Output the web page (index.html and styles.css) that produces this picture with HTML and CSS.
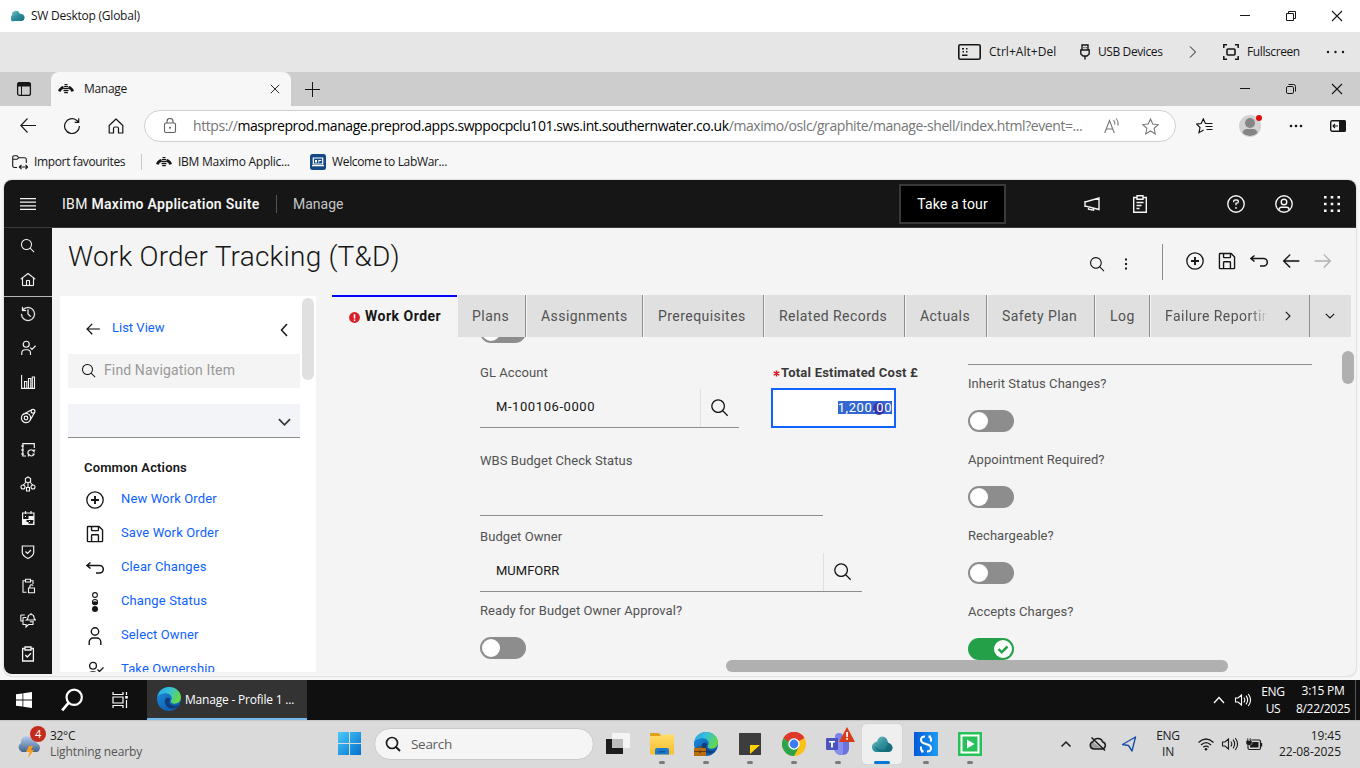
FILE: index.html
```html
<!DOCTYPE html>
<html lang="en">
<head>
<meta charset="utf-8">
<title>SW Desktop (Global)</title>
<link rel="stylesheet" href="styles.css">
</head>
<body>
<svg class="defs" aria-hidden="true">
  <defs>
    <linearGradient id="gTeal" x1="0" y1="0" x2="1" y2="1"><stop offset="0" stop-color="#7fc8cc"/><stop offset=".5" stop-color="#2e8f9b"/><stop offset="1" stop-color="#17707f"/></linearGradient>
    <linearGradient id="gEdgeA" x1="0" y1="0" x2="1" y2=".4"><stop offset="0" stop-color="#2aa5e0"/><stop offset=".5" stop-color="#35c1d8"/><stop offset="1" stop-color="#62d84e"/></linearGradient>
    <linearGradient id="gEdgeB" x1="0" y1="0" x2="1" y2="1"><stop offset="0" stop-color="#1b8fe0"/><stop offset="1" stop-color="#0c4fa0"/></linearGradient>
    <linearGradient id="gWin" x1="0" y1="0" x2="1" y2="1"><stop offset="0" stop-color="#4cc9f8"/><stop offset="1" stop-color="#0070d0"/></linearGradient>
    <linearGradient id="gFold" x1="0" y1="0" x2="0" y2="1"><stop offset="0" stop-color="#ffdc6a"/><stop offset="1" stop-color="#f8be2c"/></linearGradient>
    <linearGradient id="gCloud" x1="0" y1="0" x2="0" y2="1"><stop offset="0" stop-color="#b5cbee"/><stop offset="1" stop-color="#41648c"/></linearGradient>
    <linearGradient id="gBlue" x1="0" y1="0" x2="1" y2="0"><stop offset="0" stop-color="#0059d8"/><stop offset="1" stop-color="#1f9cf2"/></linearGradient>
  </defs>
  <symbol id="search" viewBox="0 0 32 32"><path d="M29 27.59l-7.55-7.56a11.02 11.02 0 1 0-1.42 1.42L27.59 29zM4 13a9 9 0 1 1 9 9 9 9 0 0 1-9-9z"/></symbol>
  <symbol id="save" viewBox="0 0 32 32"><path d="M27.71 9.29l-5-5A1 1 0 0 0 22 4H6a2 2 0 0 0-2 2v20a2 2 0 0 0 2 2h20a2 2 0 0 0 2-2V10a1 1 0 0 0-.29-.71zM12 6h8v4h-8zm8 20h-8v-8h8zm2 0v-8a2 2 0 0 0-2-2h-8a2 2 0 0 0-2 2v8H6V6h4v4a2 2 0 0 0 2 2h8a2 2 0 0 0 2-2V6.41l4 4V26z"/></symbol>
  <symbol id="homec" viewBox="0 0 32 32"><path d="M16.61 2.21a1 1 0 0 0-1.24 0L1 13.42 2.24 15 4 13.62V26a2 2 0 0 0 2 2h20a2 2 0 0 0 2-2V13.63L29.76 15 31 13.43zM18 26h-4v-8h4zm2 0v-8a2 2 0 0 0-2-2h-4a2 2 0 0 0-2 2v8H6V12.06l10-7.79 10 7.8V26z" stroke="currentColor" stroke-width=".3"/></symbol>
  <symbol id="left" viewBox="0 0 32 32"><path d="M14 26l1.41-1.41L7.83 17H28v-2H7.83l7.58-7.59L14 6 4 16z" stroke="currentColor" stroke-width=".2"/></symbol>
  <symbol id="history" viewBox="0 0 32 32"><path d="M20.59 22L15 16.41V7h2v8.58l5 5zM16 2A13.94 13.94 0 0 0 6 6.23V2H4v8h8V8H7.08A12 12 0 1 1 4 16H2A14 14 0 1 0 16 2z" stroke="currentColor" stroke-width=".5"/></symbol>
  <symbol id="undo" viewBox="0 0 18 18"><path class="ln" d="M4.500 3.500L1 6.500l3.500 3M1.200 6.500H13.500a3.800 3.800 0 0 1 0 7.600H10" stroke-width="1.500"/></symbol>
  <symbol id="add" viewBox="0 0 18 18"><circle class="ln" cx="9" cy="9" r="8.200" stroke-width="1.300"/><path class="ln" d="M9 5v8M5 9h8" stroke-width="1.900"/></symbol>
  <symbol id="user" viewBox="0 0 18 18"><circle class="ln" cx="9" cy="4.500" r="3.700" stroke-width="1.400"/><path class="ln" d="M3.200 18v-3a4 4 0 0 1 4-4h3.600a4 4 0 0 1 4 4v3" stroke-width="1.400"/></symbol>
  <symbol id="usercheck" viewBox="0 0 18 18"><circle class="ln" cx="7" cy="4.800" r="3.400" stroke-width="1.300"/><path class="ln" d="M2 17v-2.200a3.800 3.800 0 0 1 3.800-3.800H8a3.800 3.800 0 0 1 3.800 3.800V17M11.500 8.500l2 2L17.500 6.500" stroke-width="1.300"/></symbol>
  <symbol id="status" viewBox="0 0 18 20"><circle class="ln" cx="9" cy="3" r="2.400" stroke-width="1.100"/><circle class="ln" cx="9" cy="10" r="2.500" stroke-width="1.100"/><path d="M6 9.800h2.200L9 8.800l.8 1H12v.4a3 3 0 0 1-6 0z"/><circle cx="9" cy="17" r="3"/></symbol>
  <symbol id="chR" viewBox="0 0 12 12"><path class="ln" d="M3.800 1.800L8 6l-4.200 4.200" stroke-width="1.100"/></symbol>
  <symbol id="chD" viewBox="0 0 12 12"><path class="ln" d="M1.800 3.800L6 8l4.200-4.200" stroke-width="1.100"/></symbol>
  <symbol id="bee" viewBox="0 0 16 10"><path d="M0 6.500Q2 2.500 5 2l1 2.500L3.500 6 3 7.500Q1 8 0 6.500zM16 6.500Q14 2.500 11 2l-1 2.500L12.500 6l.5 1.500Q15 8 16 6.500z"/><path d="M6.500 0h3v1.200h-3zM5.800 2h4.400v1.200H5.800zM5.500 4h5v1.200h-5zM5.500 6h5v1.200h-5zM6.200 8h3.600v1.200H6.200z"/></symbol>
  <symbol id="min" viewBox="0 0 12 12"><path class="ln" d="M1 5.500h10" stroke-width="1"/></symbol>
  <symbol id="restore" viewBox="0 0 12 12"><path class="ln" d="M1.500 3.500h7v7h-7zM3.500 3V1.500h7v7H9" stroke-width="1"/></symbol>
  <symbol id="restoreR" viewBox="0 0 12 12"><rect class="ln" x="1.500" y="3.500" width="7" height="7" rx="1.300" stroke-width="1"/><path class="ln" d="M3.500 1.500h5a2 2 0 0 1 2 2v5" stroke-width="1"/></symbol>
  <symbol id="x" viewBox="0 0 12 12"><path class="ln" d="M1 1l10 10M11 1L1 11" stroke-width="1.100"/></symbol>
  <symbol id="spk" viewBox="0 0 18 16"><path class="ln" d="M1.500 6h2.500L7.500 3v10L4 10H1.500zM9.800 5.500q2 2.500 0 5M12 3.700q3.300 4.300 0 8.600M14.300 2q4.500 6 0 12" stroke-width="1.100"/></symbol>
  <symbol id="edge" viewBox="0 0 24 24"><circle cx="12" cy="12" r="12" fill="url(#gEdgeB)"/><path d="M.4 9.500C2 3.500 6.500 0 12 0c7 0 12 5 12 10.500 0 3.800-3 6.200-6.300 6.200-2.900 0-4-1.200-4-2.200s1-1.400 1-3.300c0-2.700-2.700-5-6-5C5 6.200 1.800 7.500.4 9.500z" fill="url(#gEdgeA)"/><path d="M8.500 11.500c-2 5 1 9.500 6 10 3 .3 6-1 7.500-3.500-3 1.600-7.500 1.200-9-1.500-1-1.800-.3-3 .3-4.200-.9-1.700-3.800-2.300-4.800-.8z" fill="#123d7c"/></symbol>
  <symbol id="clip" viewBox="0 0 16 16"><path class="ln" d="M5 2.500H2.600v12.500h10.800V2.500H11M5 1h6v3H5z" stroke-width="1.300"/></symbol>
</svg>

<header class="titlebar">
  <svg class="cloud" viewBox="0 0 14 12"><path d="M3.500 11A3 3 0 0 1 1 5.500 4 4 0 0 1 8.800 3.800 3.800 3.800 0 0 1 13.500 8 3 3 0 0 1 11 11z" fill="url(#gTeal)"/></svg>
  <span class="sg vm-name">SW Desktop (Global)</span>
  <div class="wincontrols">
    <i><svg class="s12"><use href="#min"/></svg></i><i><svg class="s12"><use href="#restore"/></svg></i><i><svg class="s12"><use href="#x"/></svg></i>
  </div>
</header>

<div class="vmbar">
  <svg class="kbd" viewBox="0 0 23 16"><rect class="ln" x=".8" y=".8" width="21.400" height="14.400" rx="1.500" stroke-width="1.600"/><path d="M4 4h2v1.500H4zM8 4h1.500v1.500H8zM4.500 7H6v1.500H4.500zM8 7h1.500v1.500H8zM4 10.500h5.500V12H4z"/></svg>
  <span class="sg t-cad">Ctrl+Alt+Del</span>
  <svg class="usb" viewBox="0 0 10 16"><path class="ln" d="M2 6V1h6v5M.8 6h8.400v4L7 12H3L.8 10zM5 12v3.500" stroke-width="1.400"/><path d="M3.500 3h1v1.200h-1zM5.700 3h1v1.200h-1z"/></svg>
  <span class="sg t-usb">USB Devices</span>
  <svg class="vchev" viewBox="0 0 8 12"><path class="ln" d="M1 .5L6.500 6 1 11.500" stroke-width="1"/></svg>
  <svg class="full" viewBox="0 0 16 16"><path class="ln" d="M.8 4V.8H4M12 .8h3.200V4M15.200 12v3.200H12M4 15.200H.8V12" stroke-width="1.500"/><rect class="ln" x="4" y="5" width="8" height="6" rx="1" stroke-width="1.600"/></svg>
  <span class="sg t-full">Fullscreen</span>
  <svg class="dots" viewBox="0 0 20 4"><circle cx="2" cy="2" r="1.200"/><circle cx="9.500" cy="2" r="1.200"/><circle cx="17" cy="2" r="1.200"/></svg>
</div>

<div class="tabstrip">
  <svg class="tabact" viewBox="0 0 16 16"><rect class="ln" x="1.600" y="1.600" width="12.800" height="12.800" rx="2" stroke-width="1.300"/><path d="M1.500 3a2 2 0 0 1 2-2h9a2 2 0 0 1 2 2v2.500h-13z"/><path class="ln" d="M5.500 5v9" stroke-width="1"/></svg>
  <div class="btab">
    <svg class="bee"><use href="#bee"/></svg><span class="sg t-manage">Manage</span><svg class="tx"><use href="#x"/></svg>
  </div>
  <svg class="plus" viewBox="0 0 15 15"><path class="ln" d="M7.500 0v15M0 7.500h15" stroke-width="1"/></svg>
  <div class="wincontrols">
    <i><svg class="s12"><use href="#min"/></svg></i><i><svg class="s12"><use href="#restoreR"/></svg></i><i><svg class="s12"><use href="#x"/></svg></i>
  </div>
</div>

<div class="addr">
  <svg class="n1" viewBox="0 0 16 16"><path class="ln" d="M16 7.500H.8M7.500 .5L.8 7.500l6.700 7" stroke-width="1.100"/></svg>
  <svg class="n2" viewBox="0 0 16 16"><path class="ln" d="M15.400 8A7.400 7.400 0 1 1 12.500 2.200L14.500 4M14.700.3v4h-4" stroke-width="1.200"/></svg>
  <svg class="n3" viewBox="0 0 16 16"><path class="ln" d="M1.200 7.500L8 1l6.800 6.500V15H10.500V10.500q0-1.500-1.500-1.500H7q-1.500 0-1.500 1.500V15H1.200z" stroke-width="1.200" stroke-linejoin="round"/></svg>
  <div class="urlbox">
    <svg class="lock" viewBox="0 0 14 16"><rect class="ln" x="1.500" y="5" width="11" height="9.500" rx="1.500" stroke-width="1.100"/><path class="ln" d="M4 5V3.500a3 3 0 0 1 6 0V5" stroke-width="1.100"/><circle cx="7" cy="9.700" r="1"/></svg>
    <span class="sg url">https://<b>maspreprod.manage.preprod.apps.swppocpclu101.sws.int.southernwater.co.uk</b>/maximo/oslc/graphite/manage-shell/index.html?event=...</span>
    <svg class="read" viewBox="0 0 16 16"><path class="ln" d="M.7 15L5.500 2.500 10.300 15M2.300 11h6.400M9.500 2.200q2 2 1.200 4.500M12 .5q3 3.500 1.700 7" stroke-width="1.100"/></svg>
    <svg class="star" viewBox="0 0 16 16"><path class="ln" d="M8 .9l2.100 4.800 5.200.5-3.900 3.500 1.100 5.200L8 12.200l-4.500 2.700 1.100-5.200L.7 6.200l5.200-.5z" stroke-width="1"/></svg>
  </div>
  <svg class="fav" viewBox="0 0 17 16"><path class="ln" d="M10.500 5.500H9.400L7.300.9 5.200 5.500l-4.600.6 3.400 3.400-1 5.200 4.600-2.600M10 5.500h6.500M9.500 8.500h7M10.500 11.500h6" stroke-width="1.200"/></svg>
  <div class="avatar"><svg viewBox="0 0 22 22"><circle cx="11" cy="11" r="11" fill="#d2d2d2"/><circle cx="11" cy="8" r="5" fill="#858585"/><path d="M3.500 18q1-4 4-4h7q3 0 4 4a11 11 0 0 1-15 0z" fill="#858585"/></svg><em></em></div>
  <svg class="more" viewBox="0 0 14 4"><circle cx="2" cy="2" r="1.300"/><circle cx="7" cy="2" r="1.300"/><circle cx="12" cy="2" r="1.300"/></svg>
  <svg class="side" viewBox="0 0 16 12"><rect class="ln" x=".7" y=".7" width="14.600" height="10.600" rx="1.500" stroke-width="1.400"/><path d="M9 0h5a2 2 0 0 1 2 2v8a2 2 0 0 1-2 2H9z"/><path class="ln" d="M8 6H3.200M5 4L3 6l2 2" stroke-width="1.100"/></svg>
</div>

<div class="books">
  <svg class="imp" viewBox="0 0 16 15"><path class="ln" d="M5 12.500H2.500q-1.800 0-1.800-1.800V2.500Q.7.800 2.500.8H5l1.800 2h5.700q1.800 0 1.800 1.800v3.500M.7 4.300H5l1.800-1.500M7.500 12h8M9.500 9.800L7.300 12l2.200 2.200M13.500 9.800l2.200 2.200-2.200 2.200" stroke-width="1.100"/></svg>
  <span class="sg t-imp">Import favourites</span><span class="bsep"></span>
  <svg class="bee"><use href="#bee"/></svg><span class="sg t-ibm">IBM Maximo Applic...</span>
  <svg class="lab" viewBox="0 0 16 16"><rect width="16" height="16" rx="2.500" fill="#134a86"/><path d="M3.300 4h9.400v6H3.300z" fill="none" stroke="#fff" stroke-width="1.200"/><path d="M2 11h12v1.300H2zM5 6h2v2.500H5zM8.300 6h3v1h-2v1.500h-1z" fill="#fff"/></svg>
  <span class="sg t-lab">Welcome to LabWar...</span>
</div>

<div class="stage">
<div class="app">
  <div class="apphead">
    <svg class="burger" viewBox="0 0 16 12"><path d="M0 0h16v1.200H0zM0 3.600h16v1.200H0zM0 7.200h16v1.200H0zM0 10.800h16V12H0z"/></svg>
    <span class="suite">IBM <b>Maximo Application Suite</b></span><span class="hsep"></span><span class="mng">Manage</span>
    <button class="tour">Take a tour</button>
    <svg class="horn" viewBox="0 0 18 16"><path class="ln" d="M16 2v11.500L2 10V6zM2 5v6M5.500 10.800v2.400l5 1v-2" stroke-width="1.400"/></svg>
    <svg class="task" viewBox="0 0 16 18"><path class="ln" d="M5 2.500H1.700v14.800h12.600V2.500H11M5 .8h6v3.400H5zM4.500 7.500h7M4.500 10.500h5M4.500 13.500h3" stroke-width="1.400"/></svg>
    <svg class="help" viewBox="0 0 18 18"><circle class="ln" cx="9" cy="9" r="8.200" stroke-width="1.400"/><path class="ln" d="M6.600 7.200V6.500q0-1.500 1.500-1.500h1.700q1.600 0 1.600 1.600T9.800 8.200H9v2" stroke-width="1.300"/><circle cx="9" cy="12.900" r=".9"/></svg>
    <svg class="acct" viewBox="0 0 18 18"><circle class="ln" cx="9" cy="9" r="8.200" stroke-width="1.400"/><circle class="ln" cx="9" cy="7" r="2.800" stroke-width="1.400"/><path class="ln" d="M4 15v-.5a2.300 2.300 0 0 1 2.300-2.300h5.400a2.300 2.300 0 0 1 2.300 2.300v.5" stroke-width="1.400"/></svg>
    <svg class="grid9" viewBox="0 0 16 16"><path d="M0 0h2.600v2.600H0zM6.700 0h2.600v2.600H6.700zM13.400 0H16v2.600h-2.600zM0 6.700h2.600v2.600H0zM6.700 6.700h2.600v2.600H6.700zM13.400 6.700H16v2.600h-2.600zM0 13.400h2.600V16H0zM6.700 13.400h2.600V16H6.700zM13.400 13.400H16V16h-2.600z"/></svg>
  </div>
  <div class="body">
    <nav class="rail">
      <i><svg><use href="#search"/></svg></i>
      <i><svg><use href="#homec"/></svg></i>
      <hr>
      <i><svg><use href="#history"/></svg></i>
      <i><svg><use href="#usercheck"/></svg></i>
      <i><svg viewBox="0 0 16 16"><path class="ln" d="M1.600 1v13.400H15M4.500 14V7.500h2.300V14M8.500 14V4.500h2.300V14M12.300 14V3h2.200v11" stroke-width="1.100"/></svg></i>
      <i><svg viewBox="0 0 16 16"><circle class="ln" cx="6" cy="10" r="4.600" stroke-width="1.200"/><circle class="ln" cx="6" cy="10" r="1.800" stroke-width="1.200"/><circle class="ln" cx="13" cy="3.300" r="1.900" stroke-width="1.200"/><path class="ln" d="M2.500 6.800L11.800 1.800M10 12.500L14.800 4" stroke-width="1.200"/></svg></i>
      <i><svg viewBox="0 0 16 16"><path class="ln" d="M6 14H2.800V1.600h11.500V6M1 4h3M1 8h3M1 12h3M14.700 8.500v-1M8 9.500q3-3.500 6 0v-2M8 9.500V12.300M14.500 12q-3 4-6 0v2.500M14.500 12h-2.200" stroke-width="1.200"/></svg></i>
      <i><svg viewBox="0 0 16 16"><path class="ln" d="M8 1l2.600 1.600v2.900L8 7 5.400 5.500V2.600zM8 7v4M6 6l-3 3.500M10 6l3 3.500" stroke-width="1.100"/><circle class="ln" cx="3" cy="11" r="2" stroke-width="1.100"/><circle class="ln" cx="13" cy="11" r="2" stroke-width="1.100"/><path class="ln" d="M6.500 11.500h3v3.500h-3z" stroke-width="1.100"/></svg></i>
      <i><svg viewBox="0 0 16 16"><path class="ln" d="M2.600 3h11.300v11.400H2.600zM5.500 1v3M11 1v3" stroke-width="1.200"/><path d="M8.500 6H14v3.500H8.500zM2.500 9.500h4V14h-4zM3 9h11v1H3zM6.500 12h2v2h-2zM5 6h1v1H5zM9 11h1v1H9zM13 12h1v2h-1z"/></svg></i>
      <i><svg viewBox="0 0 16 16"><path class="ln" d="M2.300 2h11.400v6.500q0 3.300-5.700 6-5.700-2.700-5.700-6zM5.500 7.500l2 2L11 6" stroke-width="1.200"/></svg></i>
      <i><svg viewBox="0 0 16 16"><path class="ln" d="M5.500 2.700H3v11.600h3.500M10.500 2.700H13V6M5.500 1.300h5v2.700h-5zM8.500 10h6v4.700h-6zM9.800 10V8.500a1.700 1.700 0 0 1 3.200-.8" stroke-width="1.100"/></svg></i>
      <i><svg viewBox="0 0 16 16"><path class="ln" d="M.8 3v6h2M.8 3h4M3 5.500v7h3v2.500l2.500-2.500H13V9M3 5.500h3.500M6.500 8h9q-1.500-1-1.500-2.500 0-3-3-3t-3 3Q8 7 6.500 8zM11 2.500V1M9.800 9.800h2.500" stroke-width="1.100"/></svg></i>
      <i><svg viewBox="0 0 16 16"><use href="#clip"/><path class="ln" d="M5.300 9l2 2L11 7.200" stroke-width="1.300"/></svg></i>
    </nav>
    <main class="main">
      <div class="pagehead">
        <h1>Work Order Tracking (T&amp;D)</h1>
        <svg class="ph-s"><use href="#search"/></svg>
        <svg class="ph-k" viewBox="0 0 4 12"><path d="M1 .5h2v2H1zM1 5h2v2H1zM1 9.500h2v2H1z"/></svg>
        <span class="ph-l"></span>
        <div class="acts">
          <svg><use href="#add"/></svg><svg class="big"><use href="#save"/></svg><svg><use href="#undo"/></svg><svg class="big"><use href="#left"/></svg><svg class="big flip"><use href="#left"/></svg>
        </div>
      </div>
      <div class="cols">
        <aside class="side-nav">
          <div class="inner">
            <div class="lv"><svg class="lva"><use href="#left"/></svg><a>List View</a><svg class="lvc" viewBox="0 0 8 14"><path class="ln" d="M7 1L1.500 7 7 13" stroke-width="1.500"/></svg></div>
            <div class="find"><svg><use href="#search"/></svg><span>Find Navigation Item</span></div>
            <div class="pick"><svg viewBox="0 0 14 8"><path class="ln" d="M1 1l6 6 6-6" stroke-width="1.900"/></svg></div>
            <h2>Common Actions</h2>
            <ul>
              <li><svg><use href="#add"/></svg><a>New Work Order</a></li>
              <li><svg class="big"><use href="#save"/></svg><a>Save Work Order</a></li>
              <li><svg><use href="#undo"/></svg><a>Clear Changes</a></li>
              <li><svg class="st"><use href="#status"/></svg><a>Change Status</a></li>
              <li><svg><use href="#user"/></svg><a>Select Owner</a></li>
              <li><svg><use href="#usercheck"/></svg><a>Take Ownership</a></li>
            </ul>
          </div>
          <span class="sthumb"></span>
        </aside>
        <section class="content">
          <div class="tabs">
            <div class="tab on"><svg viewBox="0 0 11 11"><circle cx="5.500" cy="5.500" r="5.400" fill="#da1e28"/><path d="M4.700 2.200h1.600V6.500H4.700zM4.700 7.500h1.600v1.500H4.700z" fill="#fff"/></svg><b>Work Order</b></div>
            <div class="tab w1">Plans</div><div class="tab w2">Assignments</div><div class="tab w3">Prerequisites</div><div class="tab w4">Related Records</div><div class="tab w5">Actuals</div><div class="tab w6">Safety Plan</div><div class="tab w7">Log</div>
            <div class="tab w8"><span class="fade">Failure Reporting</span><svg><use href="#chR"/></svg></div>
            <div class="tab w9"><svg><use href="#chD"/></svg></div>
          </div>
          <div class="form">
            <div class="c1">
              <span class="toggle cut"></span>
              <label class="l1">GL Account</label>
              <div class="fld f1"><span class="v1">M-100106-0000</span><i><svg><use href="#search"/></svg></i></div>
              <label class="l2">WBS Budget Check Status</label>
              <div class="fld f2"></div>
              <label class="l3">Budget Owner</label>
              <div class="fld f3"><span class="v2">MUMFORR</span><i><svg><use href="#search"/></svg></i></div>
              <label class="l4">Ready for Budget Owner Approval?</label>
              <span class="toggle"></span>
            </div>
            <div class="c2">
              <label class="req"><svg viewBox="0 0 8 8"><path d="M4 .5v7M.8 2.200l6.400 3.600M7.200 2.200L.8 5.800" stroke="#da1e28" stroke-width="1.700"/></svg><b>Total Estimated Cost £</b></label>
              <div class="cost"><span class="sel"><em></em>1,200.00</span></div>
            </div>
            <div class="c3">
              <div class="fld f4"></div>
              <label>Inherit Status Changes?</label><span class="toggle"></span>
              <label>Appointment Required?</label><span class="toggle"></span>
              <label>Rechargeable?</label><span class="toggle"></span>
              <label>Accepts Charges?</label><span class="toggle yes"><svg viewBox="0 0 18 18"><circle cx="9" cy="9" r="9" fill="#fff"/><path d="M4.500 9l3.200 3.300L13.500 6.500" fill="none" stroke="#24a148" stroke-width="2.500"/></svg></span>
            </div>
            <span class="vthumb"></span><span class="hthumb"></span>
          </div>
        </section>
      </div>
    </main>
  </div>
</div>
</div>

<div class="vmtask">
  <svg class="w10" viewBox="0 0 16 16"><path d="M0 2.300l6.500-.9v6.200H0zM7.300 1.200L16 0v7.600H7.300zM0 8.400h6.500v6.200L0 13.700zM7.300 8.400H16V16l-8.700-1.200z"/></svg>
  <svg class="vs" viewBox="0 0 20 22"><circle class="ln" cx="12" cy="8.500" r="7" stroke-width="2"/><path class="ln" d="M7 13.500L1 20.500" stroke-width="2.500"/></svg>
  <svg class="tv" viewBox="0 0 17 16"><path class="ln" d="M1 0v2.500h10V0M1 5h10v6H1zM1 16v-2.500h10V16M14.500 0v3M14.500 8v8" stroke-width="1.200"/><path d="M13.200 4h2.600v2.600h-2.600z"/></svg>
  <div class="run"><svg><use href="#edge"/></svg><span class="sg">Manage - Profile 1 ...</span></div>
  <div class="vtray">
    <svg class="up" viewBox="0 0 12 8"><path class="ln" d="M1 7l5-5.500L11 7" stroke-width="1.300"/></svg>
    <svg class="spk"><use href="#spk"/></svg>
    <span class="sg two lang">ENG<br>US</span><span class="sg two clock">3:15 PM<br>8/22/2025</span>
  </div>
</div>

<footer class="host">
  <div class="wx"><svg viewBox="0 0 24 26"><path d="M4 19A5 5 0 0 1 3 10 6 6 0 0 1 14 6l6 5a4.500 4.500 0 0 1-1 8z" fill="url(#gCloud)"/><path d="M11 13h4l-2 4h3l-6 8 1.500-6H8z" fill="#ff9d1c"/></svg><em class="sg">4</em></div>
  <div class="sg wt"><span>32°C</span><span class="near">Lightning nearby</span></div>
  <svg class="w11" viewBox="0 0 23 23"><path d="M0 0h11v11H0zM12 0h11v11H12zM0 12h11v11H0zM12 12h11v11H12z" fill="url(#gWin)"/></svg>
  <div class="hs"><svg viewBox="0 0 16 16"><circle class="ln" cx="7" cy="7" r="5.500" stroke-width="1.700"/><path class="ln" d="M11 11l4 4" stroke-width="1.900"/></svg><span class="sg">Search</span></div>
  <div class="apps">
    <i><svg viewBox="0 0 24 24"><path d="M0 7h17v15H0z" fill="#1d1d1d"/><path d="M6 1h18v15H6z" fill="#f6f6f6" opacity=".92"/><path d="M6 7h11v9H6z" fill="#bdbdbd"/></svg></i>
    <i class="open"><svg viewBox="0 0 24 24"><path d="M0 2q0-1 1-1h8l2 3H0z" fill="#e0a011"/><path d="M0 4h11l1-1.500h11q1 0 1 1V21q0 1.500-1.500 1.500h-21Q0 22.500 0 21z" fill="url(#gFold)"/><path d="M5 22.500V18q0-2 2-2h10q2 0 2 2v4.500z" fill="#1d79cc"/><path d="M8.500 19h7v1.500h-7z" fill="#0f569d"/></svg></i>
    <i class="open"><svg><use href="#edge"/></svg><svg class="case" viewBox="0 0 12 10"><path d="M0 2h12v8H0z" fill="#b76e12"/><path d="M4 2V.7h4V2" fill="none" stroke="#7a430a"/><path d="M0 5h12v1H0zM5 4.500h2v2.300H5z" fill="#6b3a08"/></svg></i>
    <i class="open"><svg viewBox="0 0 24 24"><path d="M1 1h22v22H1z" fill="#3d3d3d"/><path d="M12 13h10l-10 9z" fill="#ffd400"/></svg></i>
    <i class="open"><svg viewBox="0 0 24 24"><circle cx="12" cy="12" r="12" fill="#fbc116"/><path d="M12 12L1.600 6A12 12 0 0 1 22.400 6z" fill="#e0382c"/><path d="M1.600 6A12 12 0 0 0 12 24l5-9-10 0z" fill="#2ba24c"/><path d="M1.600 6L7 15l5-3V6.500z" fill="#2ba24c"/><path d="M1.600 6A12 12 0 0 1 22.400 6H12a6 6 0 0 0-5.500 4z" fill="#e0382c"/><circle cx="12" cy="12" r="5.700" fill="#fff"/><circle cx="12" cy="12" r="4.400" fill="#3b7ded"/></svg></i>
    <i class="open"><svg viewBox="0 0 24 24"><circle cx="13" cy="5" r="4" fill="#7b83eb"/><path d="M8 9h15v8a6 6 0 0 1-6 6h-2a7 7 0 0 1-7-7z" fill="#6a72dc"/><path d="M8 9h9v14a8 8 0 0 1-9-8z" fill="#878fee"/><rect y="6" width="12" height="12" rx="1" fill="#4b53bc"/><path d="M3 9h6v1.600H6.900V15.500H5.100v-4.900H3z" fill="#fff"/></svg><svg class="warn" viewBox="0 0 16 15"><path d="M8 0l8 15H0z" fill="#d83b17"/><path d="M7.200 5h1.700v5H7.200zM7.200 11h1.700v1.800H7.200z" fill="#fff"/></svg></i>
    <i class="cur"><svg viewBox="0 0 24 24"><path d="M6 20a5 5 0 0 1-3-8q1.500-2 4-2.500Q8.500 4.500 12.500 4.500q4.500.5 5.500 6 4.500 1.500 4.500 5.500-.5 4-4.500 4z" fill="url(#gTeal)"/><path d="M17.500 10.500q0 6-4.500 7.500-5-.5-8-3.500 2 5.500 7 5.500h6q4 0 4.500-4 0-4-5-5.500z" fill="#14606f" opacity=".55"/></svg></i>
    <i class="open"><svg viewBox="0 0 24 24"><path d="M0 0h24v24H0z" fill="url(#gBlue)"/><path d="M17 4.500h-2.500M11 4.500q-4 0-4 3.300 0 2.700 3.500 3.700l3 1q3.500 1 3.500 3.800 0 3.200-4 3.200M9.500 19.500H7M14.500 4.500q2.500.5 2.500 3v2M9.500 19.500Q7 19 7 16.500v-2" fill="none" stroke="#fff" stroke-width="2"/></svg></i>
    <i class="open"><svg viewBox="0 0 24 24"><path d="M0 0h24v24H0z" fill="#27c15a"/><path d="M3.500 3.500h17v17h-17z" fill="none" stroke="#fff" stroke-width="2"/><path d="M9 7.500l7.500 4.500L9 16.500z" fill="#fff"/></svg></i>
  </div>
  <div class="htray">
    <svg class="up" viewBox="0 0 12 8"><path class="ln" d="M1.500 6.500L6 2l4.500 4.500" stroke-width="1.500"/></svg>
    <svg class="cl" viewBox="0 0 18 16"><path d="M5 6.500L13 13H4.500a3.500 3.500 0 0 1-.3-7z" opacity=".3"/><path class="ln" d="M4.500 13a3.700 3.700 0 0 1-.6-7.200 5.200 5.200 0 0 1 9.800.2 3.600 3.600 0 0 1-.2 7zM2.500 1.500l13.500 13" stroke-width="1.500"/></svg>
    <svg class="lo" viewBox="0 0 16 16"><path d="M14.500 1L1.500 8.500l6 1 3.500 5.500z" fill="none" stroke="#1b4fa5" stroke-width="1.400" stroke-linejoin="round"/></svg>
    <span class="sg two lang2">ENG<br>IN</span>
    <svg class="wf" viewBox="0 0 18 16"><path class="ln" d="M1.500 6.500q7.500-7 15 0M4 9q5-4.700 10 0M6.300 11.300q2.700-2.400 5.400 0" stroke-width="1.300"/><circle cx="9" cy="13.200" r="1.300"/></svg>
    <svg class="spk"><use href="#spk"/></svg>
    <svg class="bt" viewBox="0 0 18 16"><rect x="5" y="6" width="8.500" height="5.500"/><path d="M15.500 7h1.700v3.500h-1.700z"/><rect class="ln" x="3" y="4" width="12.500" height="9.500" rx="1.500" stroke-width="1.200"/><path d="M1 4.500h1V2h1.200v2.500h1.600V2H6v2.500h1V8L5 9.500H3L1 8z" stroke="#dadada" stroke-width=".5"/></svg>
    <span class="sg two clock2">19:45<br>22-08-2025</span>
  </div>
</footer>
</body>
</html>
```
FILE: styles.css
```css
* { box-sizing: border-box; }
html, body { margin: 0; padding: 0; }
body {
  width: 1360px; height: 768px; overflow: hidden;
  display: flex; flex-direction: column;
  background: #f7f7f7; color: #161616;
  font-family: Roboto, "Liberation Sans", sans-serif;
  font-size: 13px; white-space: nowrap;
}
body > * { flex: none; }
svg { display: block; flex: none; fill: currentColor; }
i, em { font-style: normal; }
.ln { fill: none; stroke: currentColor; }
.defs { width: 0; height: 0; position: absolute; }
.sg { font-family: "Open Sans", "Noto Sans", sans-serif; font-size: 12px; letter-spacing: -.3px; flex: none; }
.s12 { width: 12px; height: 12px; }
.wincontrols { display: flex; margin-left: auto; }
.wincontrols i { width: 46px; display: flex; justify-content: center; }

/* remote session title bar and tools */
.titlebar { height: 32px; background: #fff; display: flex; align-items: center; padding-left: 11px; }
.cloud { width: 14px; height: 12px; }
.titlebar .sg { margin-left: 6px; letter-spacing: -.24px; padding-bottom: 1px; }
.vmbar { height: 40px; background: #e6e6e6; display: flex; align-items: center; padding-left: 958px; }
.vmbar .sg { padding-bottom: 2px; }
.kbd { width: 23px; height: 16px; }
.vmbar .t-cad { margin-left: 8px; width: 91px; letter-spacing: .04px; }
.usb { width: 10px; height: 16px; }
.vmbar .t-usb { margin-left: 8px; width: 91px; letter-spacing: -.4px; }
.vchev { width: 8px; height: 12px; }
.full { width: 16px; height: 16px; margin-left: 26px; }
.vmbar .t-full { margin-left: 8px; width: 79px; letter-spacing: -.4px; }
.dots { width: 20px; height: 4px; }

/* browser chrome */
.tabstrip { height: 34px; background: #cdcdcd; display: flex; align-items: center; }
.tabact { width: 16px; height: 16px; margin-left: 16px; }
.btab { width: 240px; height: 34px; margin-left: 19px; background: #f7f7f7; border-radius: 8px 8px 0 0; display: flex; align-items: center; padding-left: 7px; }
.bee { width: 16px; height: 10px; }
.btab .t-manage { margin-left: 10px; width: 186px; padding-bottom: 1px; }
.tx { width: 10px; height: 10px; }
.plus { width: 15px; height: 15px; margin-left: 14px; }
.addr { height: 40px; display: flex; align-items: center; }
.n1, .n2, .n3 { width: 16px; height: 16px; }
.n1 { margin-left: 20px; }
.n2, .n3 { margin-left: 28px; }
.urlbox { margin-left: 20px; width: 1032px; height: 32px; border: 1px solid #cfcfcf; border-radius: 16px; background: #fff; display: flex; align-items: center; color: #767676; }
.lock { width: 14px; height: 16px; margin-left: 18px; color: #5e5e5e; }
.urlbox .url { font-size: 14px; margin-left: 16px; width: 911px; letter-spacing: -.422px; padding-bottom: 1px; }
.url b { font-weight: 400; color: #000; }
.read { width: 16px; height: 16px; }
.star { width: 17px; height: 17px; margin-left: 22px; }
.fav { width: 17px; height: 16px; margin-left: 20px; }
.avatar { position: relative; width: 22px; height: 22px; margin-left: 26px; }
.avatar em { position: absolute; right: -1px; top: 0; width: 6px; height: 6px; border-radius: 50%; background: #e00b0b; }
.more { width: 14px; height: 4px; margin-left: 28px; }
.side { width: 16px; height: 12px; margin-left: 27px; }
.books { height: 33px; display: flex; align-items: center; padding: 0 0 1px 12px; }
.books .sg { padding-bottom: 1px; }
.imp { width: 16px; height: 15px; }
.books .t-imp { margin-left: 6px; width: 107px; letter-spacing: -.36px; }
.bsep { width: 1px; height: 16px; background: #c8c8c8; margin-right: 14px; }
.books .t-ibm { margin-left: 6px; width: 132px; letter-spacing: -.25px; }
.lab { width: 16px; height: 16px; }
.books .t-lab { margin-left: 6px; letter-spacing: -.34px; }

/* application shell */
.stage { height: 501px; padding: 1px 4px 0; }
.app { height: 496px; border-radius: 8px; overflow: hidden; background: #f4f4f4; box-shadow: 0 0 2px #aaa; }
.apphead { height: 48px; background: #161616; border-bottom: 1px solid #393939; color: #f4f4f4; display: flex; align-items: center; padding-left: 16px; font-size: 14px; }
.burger { width: 16px; height: 12px; }
.suite { margin-left: 26px; width: 214px; letter-spacing: .3px; }
.suite b { font-weight: 600; }
.hsep { width: 1px; height: 18px; background: #525252; }
.mng { margin-left: 16px; width: 606px; color: #c6c6c6; }
.tour { width: 107px; height: 40px; padding: 0; border: 2px solid #393939; background: #000; color: #fff; font: 14px Roboto, sans-serif; letter-spacing: .15px; }
.horn { width: 18px; height: 16px; margin-left: 77px; }
.task { width: 16px; height: 18px; margin-left: 31px; }
.help { width: 18px; height: 18px; margin-left: 79px; }
.acct { width: 18px; height: 18px; margin-left: 30px; }
.grid9 { width: 16px; height: 16px; margin-left: 31px; }
.body { display: flex; height: 446px; }
.rail { width: 48px; flex: none; background: #161616; color: #f4f4f4; border-bottom-left-radius: 8px; overflow: hidden; }
.rail i { height: 34px; display: flex; align-items: center; justify-content: center; }
.rail svg { width: 16px; height: 16px; margin-top: 2px; }
.rail hr { margin: 0 0 -1px; border: 0; height: 1px; background: #b5b5b5; }
.main { width: 1304px; padding-left: 8px; }
.pagehead { height: 67px; padding-left: 8px; display: flex; }
h1 { margin: 11px 0 0; width: 1021px; font-size: 28px; line-height: 36px; font-weight: 300; letter-spacing: .22px; color: #161616; }
.ph-s { width: 17px; height: 17px; margin-top: 28px; }
.ph-k { width: 4px; height: 12px; margin: 30px 0 0 18px; }
.ph-l { width: 1px; height: 36px; margin: 16px 23px 0 34px; background: #8d8d8d; }
.acts { display: flex; align-items: center; height: 20px; margin-top: 23px; gap: 14px; }
.acts svg { width: 18px; height: 18px; }
.acts .big { width: 22px; height: 22px; margin: 0 -2px; }
.acts .flip { transform: scaleX(-1); color: #b3b3b3; }
.cols { display: flex; height: 377px; }
.side-nav { width: 256px; height: 376px; margin-top: 1px; background: #fff; display: flex; overflow: hidden; flex: none; }
.inner { width: 240px; padding-left: 8px; margin-right: 2px; }
.lv { height: 58px; padding: 6px 0 0 16px; display: flex; align-items: center; }
.side-nav a { color: #0f62fe; }
.lva { width: 18px; height: 18px; margin-top: 1px; }
.lv a { margin: -2px 0 0 10px; width: 168px; letter-spacing: 0; }
.lvc { width: 8px; height: 14px; margin-top: 3px; }
.find { height: 34px; width: 232px; background: #f4f4f4; display: flex; align-items: center; padding-left: 13px; color: #161616; }
.find svg { width: 16px; height: 16px; }
.find span { margin: -2px 0 0 7px; font-size: 14px; color: #999; letter-spacing: .12px; }
.pick { height: 34px; width: 232px; margin-top: 16px; background: #f2f4f8; border-bottom: 1px solid #8d8d8d; display: flex; align-items: center; justify-content: flex-end; padding-right: 9px; color: #393939; }
.pick svg { width: 13px; height: 8px; margin-top: 2px; }
h2 { margin: 18px 0 1px 16px; font-size: 13px; line-height: 24px; font-weight: 600; letter-spacing: .15px; }
ul { margin: 0; padding: 0; list-style: none; }
li { height: 34px; display: flex; align-items: center; padding-left: 18px; }
li svg { width: 18px; height: 18px; margin-top: 3px; }
li .big { width: 22px; height: 22px; margin-left: -2px; margin-right: -2px; }
li .st { height: 20px; margin-top: 4px; }
li a { margin-left: 17px; letter-spacing: .12px; }
.sthumb { width: 12px; height: 82px; margin-top: 2px; border-radius: 6px; background: #e0e0e0; }

/* tab strip and form */
.content { margin-left: 16px; width: 1024px; }
.tabs { display: flex; height: 42px; }
.tab { height: 42px; background: #e0e0e0; border-right: 1px solid #8d8d8d; box-shadow: inset 1px 0 #f4f4f4; display: flex; align-items: center; font-size: 14px; color: #525252; letter-spacing: .45px; padding-left: 15px; flex: none; }
.tab.on { width: 125px; padding-left: 17px; background: #f4f4f4; border: 0; border-top: 2px solid #00f; box-shadow: none; color: #161616; letter-spacing: .5px; padding-bottom: 2px; }
.tab.on svg { width: 11px; height: 11px; margin: 2px 5px 0 0; }
.tab.on b { font-weight: 700; }
.w1 { width: 69px; } .w2 { width: 117px; } .w3 { width: 121px; } .w4 { width: 141px; } .w5 { width: 82px; } .w6 { width: 108px; } .w7 { width: 55px; } .w8 { width: 160px; }
.w9 { width: 41px; border: 0; box-shadow: none; }
.tab svg { width: 12px; height: 12px; color: #161616; }
.w9 svg { margin-left: -1px; }
.fade { width: 103px; margin-right: 14px; overflow: hidden; -webkit-mask-image: linear-gradient(90deg, #000 82%, transparent); mask-image: linear-gradient(90deg, #000 82%, transparent); }
.form { position: relative; height: 335px; overflow: hidden; display: flex; padding-left: 148px; color: #525252; }
.form label { display: block; height: 16px; line-height: 16px; letter-spacing: .06px; }
.toggle { display: block; width: 46px; height: 22px; border-radius: 11px; background: #8d8d8d; padding: 2px; }
.toggle::before { content: ""; display: block; width: 18px; height: 18px; border-radius: 50%; background: #fff; }
.toggle.yes { background: #24a148; padding-left: 26px; }
.toggle.yes::before { display: none; }
.cut { margin-top: -16px; }
.fld { height: 40px; border-bottom: 1px solid #8d8d8d; display: flex; align-items: center; justify-content: space-between; padding-left: 16px; color: #161616; }
.fld span { margin-top: -2px; }
.v1 { letter-spacing: .58px; }
.fld i { width: 39px; height: 38px; border-left: 1px solid #e0e0e0; display: flex; align-items: center; padding-left: 9px; }
.fld svg { width: 20px; height: 20px; }
.c1 { width: 291px; }
.l1 { margin: 22px 0 7px; }
.f1 { width: 259px; }
.l2 { margin: 25px 0 6px; }
.f2 { width: 343px; height: 41px; }
.l3 { margin: 13px 0 7px; }
.f3 { width: 382px; }
.l4 { margin: 11px 0 18px; }
.c2 { width: 197px; padding-top: 28px; }
.form .req { display: flex; align-items: center; color: #393939; padding-left: 2px; letter-spacing: .22px; }
.req svg { width: 7px; height: 7px; margin-right: 1px; }
.cost { width: 125px; height: 40px; margin-top: 7px; border: 2px solid #0f62fe; background: #fff; display: flex; align-items: center; justify-content: flex-end; padding: 0 2px 1px 0; }
.sel { position: relative; z-index: 0; background: #3367d1; color: #fff; line-height: 13px; letter-spacing: .55px; }
.sel em { position: absolute; z-index: -1; left: 35px; top: 1px; width: 12px; height: 13px; border-radius: 50%; background: #3733a8; }
.c3 { width: 344px; }
.f4 { height: 28px; }
.form .c3 label { margin: 11px 0 18px; }
.form .c3 .toggle + label { margin-top: 20px; }
.vthumb { position: absolute; left: 1010px; top: 14px; width: 12px; height: 33px; border-radius: 6px; background: #b0b0b0; }
.hthumb { position: absolute; left: 394px; top: 323px; width: 502px; height: 12px; border-radius: 6px; background: #b0b0b0; }

/* remote desktop taskbar */
.vmtask { height: 40px; background: #101010; color: #fff; display: flex; align-items: center; }
.w10 { width: 16px; height: 16px; margin-left: 16px; }
.vs { width: 22px; height: 24px; margin-left: 29px; }
.tv { width: 17px; height: 16px; margin-left: 29px; }
.run { width: 160px; height: 40px; margin-left: 18px; background: #333; border-bottom: 2px solid #76b9ed; display: flex; align-items: center; padding-left: 10px; }
.run svg { width: 24px; height: 24px; }
.run .sg { margin-left: 4px; letter-spacing: -.2px; }
.vtray { margin-left: auto; width: 150px; height: 40px; display: flex; align-items: center; box-shadow: inset -4px 0 #101010, inset -5px 0 #555; }
.up { width: 12px; height: 8px; margin-left: 3px; }
.spk { width: 18px; height: 16px; margin-left: 9px; }
.two { text-align: center; line-height: 17px; }
.lang { width: 36px; margin-left: 3px; }
.clock { width: 64px; margin-top: -1px; line-height: 18px; }

/* host taskbar */
.host { height: 48px; padding-bottom: 2px; background: #dadada; border-top: 1px solid #c6c6c6; display: flex; align-items: center; color: #1b1b1b; }
.wx { position: relative; width: 24px; height: 26px; margin-left: 18px; }
.wx svg { width: 24px; height: 26px; margin-top: 2px; }
.wx .sg { position: absolute; left: 12px; top: -5px; width: 16px; height: 16px; border-radius: 50%; background: #c42b1c; color: #fff; text-align: center; line-height: 16px; font-size: 11px; }
.wt { margin-left: 8px; width: 288px; line-height: 16px; display: flex; flex-direction: column; }
.near { color: #555; letter-spacing: -.1px; }
.w11 { width: 23px; height: 23px; }
.hs { width: 220px; height: 32px; margin-left: 13px; border-radius: 16px; border: 1px solid #c9c9c9; background: #f5f5f5; display: flex; align-items: center; padding-left: 10px; }
.hs svg { width: 16px; height: 16px; }
.hs .sg { margin-left: 10px; font-size: 13.5px; color: #5d5d5d; letter-spacing: -.3px; }
.apps { display: flex; gap: 4px; padding-left: 4px; }
.apps i { position: relative; width: 40px; height: 40px; border-radius: 4px; display: flex; align-items: center; justify-content: center; }
.apps svg { width: 24px; height: 24px; }
.apps .open::after, .apps .cur::after { content: ""; position: absolute; bottom: 0; left: 17px; width: 6px; height: 3px; border-radius: 2px; background: #7a7a7a; }
.apps .cur { background: #efefef; box-shadow: 0 0 1px #aaa; }
.apps .cur::after { left: 12px; width: 16px; background: #0078d4; }
.apps .case { position: absolute; left: 8px; top: 22px; width: 12px; height: 10px; }
.apps .warn { position: absolute; left: 21px; top: 3px; width: 16px; height: 15px; }
.htray { display: flex; align-items: center; margin-left: auto; width: 303px; }
.cl { width: 18px; height: 16px; margin-left: 17px; }
.lo { width: 16px; height: 16px; margin-left: 14px; }
.lang2 { width: 36px; margin-left: 13px; line-height: 16px; }
.wf { width: 18px; height: 16px; margin-left: 11px; }
.htray .spk { margin-left: 6px; }
.bt { width: 18px; height: 16px; margin-left: 6px; }
.htray .clock2 { width: 78px; text-align: right; line-height: 16px; letter-spacing: -.05px; }
```
